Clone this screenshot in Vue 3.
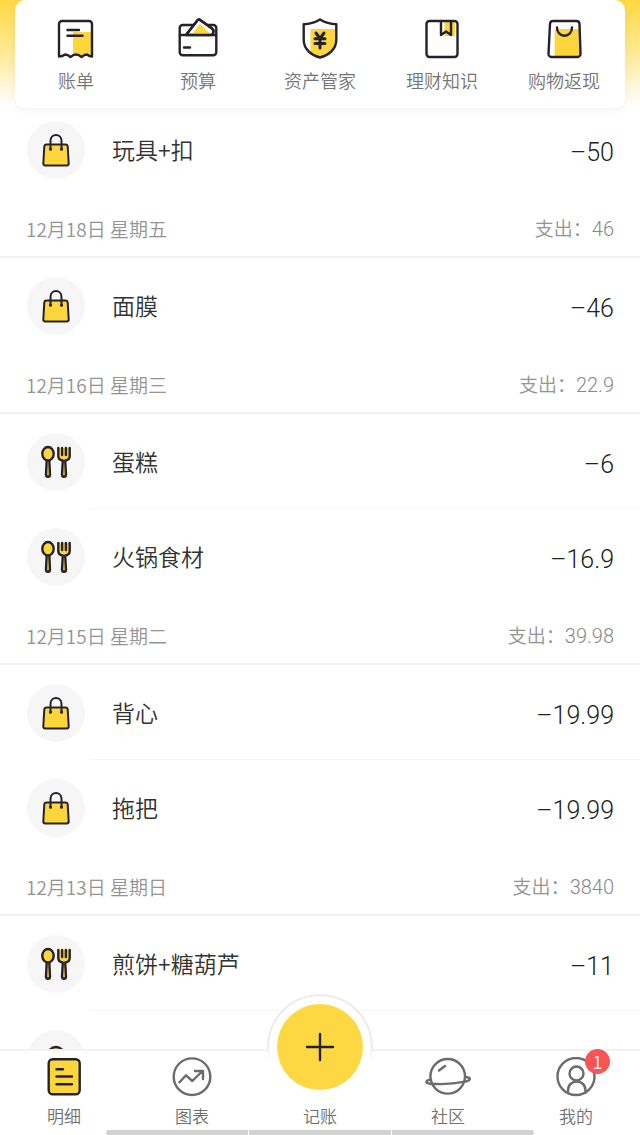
<script setup>
const shortcuts = [
  { id: 'bill', label: '账单' },
  { id: 'budget', label: '预算' },
  { id: 'asset', label: '资产管家' },
  { id: 'book', label: '理财知识' },
  { id: 'cashback', label: '购物返现' },
]

const days = [
  { date: '', total: '', items: [{ icon: 'bag', name: '玩具+扣', amount: '50' }] },
  { date: '12月18日 星期五', total: '46', items: [{ icon: 'bag', name: '面膜', amount: '46' }] },
  {
    date: '12月16日 星期三',
    total: '22.9',
    items: [
      { icon: 'food', name: '蛋糕', amount: '6' },
      { icon: 'food', name: '火锅食材', amount: '16.9' },
    ],
  },
  {
    date: '12月15日 星期二',
    total: '39.98',
    items: [
      { icon: 'bag', name: '背心', amount: '19.99' },
      { icon: 'bag', name: '拖把', amount: '19.99' },
    ],
  },
  {
    date: '12月13日 星期日',
    total: '3840',
    items: [
      { icon: 'food', name: '煎饼+糖葫芦', amount: '11' },
      { icon: 'round', name: '', amount: '' },
    ],
  },
]
</script>

<template>
  <div class="app">
    <header class="top">
      <nav class="shortcuts">
        <button v-for="s in shortcuts" :key="s.id" type="button" class="shortcut">
          <svg class="line dark" width="40" height="42" viewBox="0 0 40 42" aria-hidden="true">
            <g v-if="s.id === 'bill'">
              <path class="fill" d="M17 14h19v23l-5-1-5 2-6-2-3 1z" />
              <path d="M3 38.500V6a3 3 0 0 1 3-3h27a3 3 0 0 1 3 3v32.500q-2.500 0-5-2-2.700 0-5.500 2.500-2.700-2.500-5.500-2.500-2.700 0-5.500 2.500-2.700-2.500-5.500-2.500-2.500 2-6 2z" />
              <path d="M11.500 12h11.500M11.500 17.700h15" />
            </g>
            <g v-else-if="s.id === 'budget'">
              <rect x="1.700" y="7" width="36.600" height="30.300" rx="3" />
              <path class="paper" d="M8 17 19.500 2.300q1.500-1.500 3 0L34 10.500q3 2.500 0 6.500z" />
              <path class="fill" d="m14 16 8-10 10.500 10z" />
              <path d="M8 17 19.500 2.300q1.500-1.500 3 0L34 10.500q3 2.500 0 6.500M2 17h36M6 29.500h6" />
            </g>
            <g v-else-if="s.id === 'asset'">
              <path class="fill" d="M10.500 11H36v12c0 8-8 14-16 16.500-4-1.500-7-3-9.500-6z" />
              <path d="M20 1.500Q27.500 6 36.300 6.300V22C36.300 31.500 28 37.500 20 39.500 12 37.500 3.700 31.500 3.700 22V6.300Q12.500 6 20 1.500z" />
              <path class="thick" d="m16 15 4 5.500 4-5.500M20 20.500V30M15 20.700h10M15 25.500h10" />
            </g>
            <g v-else-if="s.id === 'book'">
              <path class="fill" d="M22.500 3.500H33V18H22.500z" />
              <rect x="4.500" y="3" width="31" height="36" rx="3" />
              <path d="M19 3.500V17l5-3.500 5 3.500V3.500" />
            </g>
            <g v-else>
              <path class="fill" d="M10.700 11H35l1 27H10.700z" />
              <path d="M9 3h23.500a3 3 0 0 1 3 2.800l1 30a3 3 0 0 1-3 3.200H7.500a3 3 0 0 1-3-3.200l1.500-30A3 3 0 0 1 9 3z" />
              <path d="M13 9.500c0 11 15 11 15 0" />
            </g>
          </svg>
          <span>{{ s.label }}</span>
        </button>
      </nav>
    </header>

    <main class="ledger">
      <section v-for="(d, i) in days" :key="i">
        <h2 v-if="d.date" class="day">
          <span>{{ d.date }}</span>
          <span>支出：<span class="num">{{ d.total }}</span></span>
        </h2>
        <ul class="items">
          <li v-for="(it, j) in d.items" :key="j" class="item">
            <span class="badge-icon">
              <svg v-if="it.icon === 'bag'" class="line dark slim" width="32" height="34" viewBox="0 0 32 34" aria-hidden="true">
                <path class="solid" d="M6.500 11.500h19q2 0 2.200 2l1 17q0 2-2 2H5.300q-2 0-2-2l1-17q.2-2 2.200-2z" />
                <path d="M10.500 16V8c0-8 11-8 11 0v8" />
                <path class="thick" d="M10.500 16v.2M21.500 16v.2" />
              </svg>
              <svg v-else-if="it.icon === 'food'" class="line dark" width="32" height="34" viewBox="0 0 32 34" aria-hidden="true">
                <path class="solid" d="M6.700 15 6 29.500q0 2.300 2 2.300t2-2.300L9.300 15z" />
                <ellipse class="solid" cx="8" cy="8.700" rx="5.700" ry="6.700" />
                <path class="solid" d="M18.300 3v8q0 4 4.500 4.500L22 29.500q0 2.300 2 2.300t2-2.300l-.8-14q4.500-.5 4.500-4.500V3" />
                <path d="M22.100 3v7M25.900 3v7" />
              </svg>
              <svg v-else class="line dark" width="32" height="34" viewBox="0 0 32 34" aria-hidden="true">
                <circle class="solid" cx="16" cy="13" r="8" />
                <path class="solid" d="M4 31c0-12 24-12 24 0z" />
              </svg>
            </span>
            <span class="body">
              <span class="name">{{ it.name }}</span>
              <span v-if="it.amount" class="num amount">–{{ it.amount }}</span>
            </span>
          </li>
        </ul>
      </section>
    </main>

    <nav class="tabs">
      <button type="button" class="tab">
        <svg class="line dark" width="40" height="40" viewBox="0 0 40 40" aria-hidden="true">
          <rect class="solid" x="4.700" y="2.300" width="31" height="35" rx="4" />
          <path d="M12.500 12.300h6.500M12.500 19.500h15.500M12.500 27.300h15.500" />
        </svg>
        <span>明细</span>
      </button>
      <button type="button" class="tab">
        <svg class="line gray" width="40" height="40" viewBox="0 0 40 40" aria-hidden="true">
          <circle cx="20" cy="19.700" r="18.300" />
          <path d="m7.500 25.300 6.500-7 6.300 5.700L30.500 14M23 14h8v8" />
        </svg>
        <span>图表</span>
      </button>
      <button type="button" class="tab add">
        <span class="ring">
          <span class="disc">
            <svg class="line dark" width="32" height="32" viewBox="0 0 32 32" aria-hidden="true">
              <path d="M16 3v26M3 16h26" />
            </svg>
          </span>
        </span>
        <span>记账</span>
      </button>
      <button type="button" class="tab">
        <svg class="line gray" width="46" height="40" viewBox="0 0 46 40" aria-hidden="true">
          <circle cx="22.700" cy="19.300" r="17.300" />
          <path d="M6 22.500c-6 1-6 3.800-1 4.200 11 .9 24 .3 35-2 6.500-1.500 6.500-4.500 0-4.700M14 13.500l6-4.500" />
        </svg>
        <span>社区</span>
      </button>
      <button type="button" class="tab">
        <svg class="line gray" width="40" height="40" viewBox="0 0 40 40" aria-hidden="true">
          <circle cx="20" cy="19.500" r="18.500" />
          <circle cx="20.500" cy="16.500" r="7" />
          <path d="M12 35.500v-2c0-12 17.500-12 17.500 0v2" />
        </svg>
        <span>我的</span>
        <span class="count">1</span>
      </button>
      <span class="home"><i></i><i></i><i></i></span>
    </nav>
  </div>
</template>

<style>
body {
  margin: 0;
  background: #fff;
}
</style>

<style scoped>
.app {
  display: flex;
  flex-direction: column;
  height: 100vh;
  overflow: hidden;
  background: #fff linear-gradient(#ffd943, #ffe98f 50px, #fff 106px) no-repeat 0 0 / 100% 106px;
  color: #333;
  font-family: "Noto Sans CJK SC", sans-serif;
  font-weight: 350;
}

button {
  padding: 0;
  border: 0;
  background: none;
  color: inherit;
  font: inherit;
}

.line {
  display: block;
  fill: none;
  stroke-width: 2.4;
  stroke-linecap: round;
  stroke-linejoin: round;
}
.slim { stroke-width: 2; }
.dark { stroke: #25222b; }
.gray { stroke: #6c6c6c; }
.fill { fill: #fdd63b; stroke: none; }
.solid { fill: #fdd63b; }
.paper { fill: #fff; }
.thick { stroke-width: 3; }

.top {
  position: relative;
  z-index: 1;
  flex: none;
  padding: 0 15px;
}
.shortcuts {
  display: grid;
  grid-template-columns: repeat(5, 1fr);
  height: 108px;
  border-radius: 10px;
  background: #fff;
  box-shadow: 0 2px 12px rgba(0, 0, 0, 0.05);
}
.shortcut {
  display: flex;
  flex-direction: column;
  align-items: center;
  justify-content: flex-start;
  gap: 7px;
  padding-top: 18px;
  color: #757575;
  font-size: 18px;
  line-height: 26px;
}

.ledger {
  flex: 1;
  min-height: 0;
  margin-top: -6px;
  overflow: hidden;
}
.day {
  display: flex;
  align-items: center;
  justify-content: space-between;
  box-sizing: border-box;
  height: 61px;
  margin: 0;
  padding: 4px 26px 0;
  border-bottom: 2px solid #f2f2f2;
  color: #949494;
  font-size: 19px;
  font-weight: 350;
  line-height: 28px;
}
.num {
  font-family: Roboto, "Liberation Sans", sans-serif;
  font-weight: 300;
}
.day .num {
  color: #888;
  font-size: 20px;
}
.items {
  margin: 0;
  padding: 0;
  list-style: none;
}
.item {
  display: flex;
  align-items: center;
  height: 95px;
  padding-left: 27px;
}
.badge-icon {
  display: flex;
  align-items: center;
  justify-content: center;
  flex: none;
  width: 58px;
  height: 58px;
  border-radius: 50%;
  background: #f6f6f6;
}
.body {
  display: flex;
  flex: 1;
  align-items: center;
  justify-content: space-between;
  box-sizing: border-box;
  height: 95px;
  margin-left: 5px;
  padding: 0 26px 0 22px;
  border-bottom: 1px solid #f7f7f7;
  font-size: 23px;
  line-height: 34px;
}
.item:last-child .body { border-bottom-color: transparent; }
.amount {
  padding-top: 8px;
  color: #222;
  font-size: 25px;
}

.tabs {
  position: relative;
  display: grid;
  grid-template-columns: repeat(5, 1fr);
  flex: none;
  box-sizing: border-box;
  height: 86px;
  border-top: 2px solid #f2f2f2;
  background: #fff;
}
.tab {
  position: relative;
  display: flex;
  flex-direction: column;
  align-items: center;
  justify-content: flex-start;
  gap: 7px;
  padding-top: 6px;
  color: #707070;
  font-size: 17px;
  line-height: 24px;
}
.add { padding-top: 53px; }
.ring {
  position: absolute;
  top: -57px;
  left: 50%;
  display: flex;
  align-items: center;
  justify-content: center;
  box-sizing: border-box;
  width: 106px;
  height: 106px;
  margin-left: -53px;
  border-radius: 50%;
  background: #fff;
}
.ring::before {
  content: "";
  position: absolute;
  inset: 0;
  border: 2px solid #ebe9ef;
  border-radius: 50%;
  mask-image: linear-gradient(#000 50%, transparent 64%);
}
.disc {
  display: flex;
  align-items: center;
  justify-content: center;
  width: 86px;
  height: 86px;
  border-radius: 50%;
  background: #fdd843;
}
.count {
  position: absolute;
  top: -2px;
  left: 50%;
  width: 25px;
  height: 25px;
  margin-left: 9px;
  border-radius: 50%;
  background: #fb5456;
  color: #fff;
  font-size: 18px;
  line-height: 25px;
  text-align: center;
}
.home {
  position: absolute;
  right: 0;
  bottom: 0;
  left: 0;
  display: flex;
  justify-content: center;
  gap: 1px;
}
.home i {
  width: 142px;
  height: 5px;
  background: #d2d2d2;
}
.home i:first-child { border-radius: 3px 0 0 3px; }
.home i:last-child { border-radius: 0 3px 3px 0; }
</style>
